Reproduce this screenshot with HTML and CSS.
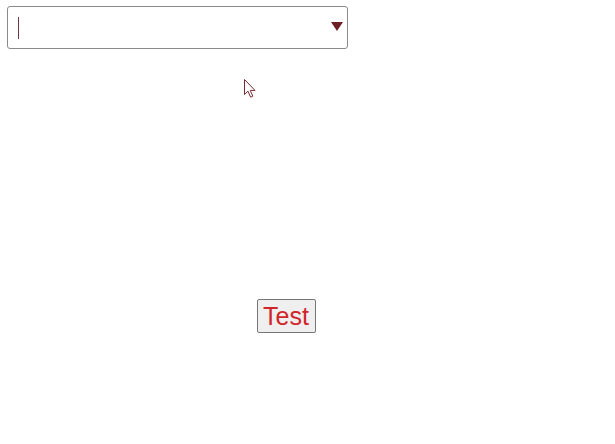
FILE: index.html
```html
<!DOCTYPE html>
<html>
<head>
<meta charset="utf-8">
<link rel="stylesheet" href="styles.css">
</head>
<body>
<div class="page">
  <div class="combo">
    <span class="caret"></span>
    <svg class="arrow" width="12" height="10" viewBox="0 0 12 10"><path d="M0 0H12L6 9Z" fill="#6e1f25"/></svg>
  </div>
  <div class="actions">
    <button class="test-btn">Test</button>
  </div>
</div>
<svg class="pointer" width="14" height="20" viewBox="0 0 14 20">
  <path d="M0.5 0.5V15.5L4 12.2L6.6 18.2L8.8 17.2L6.3 11.4H11Z" fill="#fff" stroke="#7a2a30" stroke-width="1"/>
</svg>
</body>
</html>
```
FILE: styles.css
```css
html, body {
  margin: 0;
  padding: 0;
  background: #fff;
  font-family: "Liberation Sans", Arial, sans-serif;
}
.page {
  padding: 6px 0 0 7px;
}
.combo {
  box-sizing: border-box;
  width: 341px;
  height: 43px;
  border: 1px solid #8a8a8a;
  border-radius: 3px;
  display: flex;
  align-items: center;
  justify-content: space-between;
  padding: 0 4px 0 10px;
}
.caret {
  width: 1px;
  height: 22px;
  background: #6b3a44;
}
.arrow {
  display: block;
  margin-top: -1px;
}
.actions {
  padding: 250px 0 0 250px;
}
.test-btn {
  box-sizing: border-box;
  height: 34px;
  padding: 0 6px 0 5px;
  font-family: "Liberation Sans", Arial, sans-serif;
  font-size: 25px;
  color: #d0262a;
  background: #efefef;
  border: 1px solid #767676;
  border-radius: 2px;
}
.pointer {
  position: absolute;
  left: 244px;
  top: 79px;
}
```
